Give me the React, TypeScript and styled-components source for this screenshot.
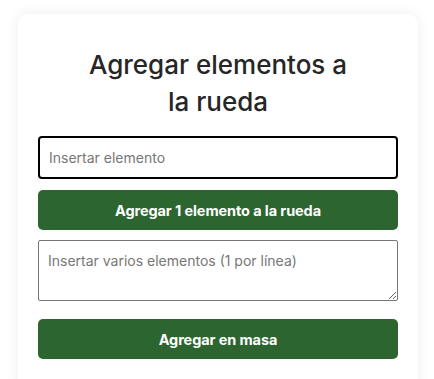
import React, { useState } from 'react';
import styled, { createGlobalStyle } from 'styled-components';

const GlobalStyle = createGlobalStyle`
  html, body {
    margin: 0;
    padding: 0;
    background: #fff;
  }
  body {
    font-family: Inter, "Noto Sans", "Liberation Sans", sans-serif;
    color: #262626;
  }
  * {
    box-sizing: border-box;
  }
`;

const Page = styled.div`
  padding: 14px 16px 0 18px;
`;

const Card = styled.div`
  width: 400px;
  min-height: 380px;
  background: #fff;
  border-radius: 10px;
  box-shadow: 0 0 14px rgba(0, 0, 0, 0.07);
  padding: 32px 20px 20px;
  display: flex;
  flex-direction: column;
`;

const Title = styled.h2`
  margin: 0 0 16px;
  text-align: center;
  font-size: 26px;
  font-weight: 500;
  line-height: 37px;
  letter-spacing: 0;
  color: #262626;
`;

const TextInput = styled.input`
  height: 43px;
  width: 100%;
  padding: 0 9px;
  border: 2px solid #000;
  border-radius: 4px;
  font-family: inherit;
  font-size: 14px;
  color: #222;
  outline: none;

  &::placeholder {
    color: #777;
  }
`;

const TextArea = styled.textarea`
  display: block;
  height: 61px;
  width: 100%;
  padding: 10px 9px;
  border: 1px solid #767676;
  border-radius: 2px;
  font-family: inherit;
  font-size: 14px;
  line-height: 1.4;
  color: #222;
  resize: vertical;
  outline: none;

  &::placeholder {
    color: #777;
  }
`;

const Button = styled.button<{ $gap: number }>`
  height: 40px;
  width: 100%;
  margin-top: ${(p) => p.$gap}px;
  border: none;
  border-radius: 5px;
  background: #2c652f;
  color: #fff;
  font-family: inherit;
  font-size: 14.5px;
  font-weight: 700;
  letter-spacing: -0.1px;
  cursor: pointer;
`;

const Bulk = styled.div`
  margin-top: 10px;
`;

export default function App() {
  const [item, setItem] = useState('');
  const [items, setItems] = useState('');

  return (
    <Page>
      <GlobalStyle />
      <Card>
        <Title>
          Agregar elementos a
          <br />
          la rueda
        </Title>
        <TextInput
          type="text"
          placeholder="Insertar elemento"
          value={item}
          onChange={(e) => setItem(e.target.value)}
        />
        <Button $gap={11}>Agregar 1 elemento a la rueda</Button>
        <Bulk>
          <TextArea
            placeholder="Insertar varios elementos (1 por línea)"
            value={items}
            onChange={(e) => setItems(e.target.value)}
          />
        </Bulk>
        <Button $gap={18}>Agregar en masa</Button>
      </Card>
    </Page>
  );
}
